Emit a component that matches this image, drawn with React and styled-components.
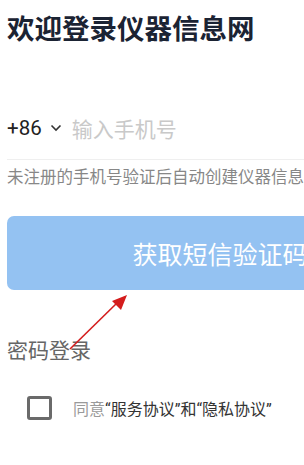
import { createGlobalStyle, styled } from "styled-components";

const GlobalStyle = createGlobalStyle`
  html, body {
    margin: 0;
    padding: 0;
    background: #ffffff;
    overflow: hidden;
  }
  body {
    font-family: Roboto, "Noto Sans CJK SC", sans-serif;
  }
`;

const Page = styled.div`
  position: relative;
  width: 440px;
  height: 465px;
  padding: 14px 0 0 7px;
  box-sizing: border-box;
`;

const Title = styled.h1`
  margin: 0;
  font-size: 27.5px;
  line-height: 32px;
  font-weight: 700;
  color: #1b2333;
`;

const PhoneRow = styled.div`
  display: flex;
  align-items: center;
  height: 40px;
  margin-top: 62px;
  padding-bottom: 11px;
  border-bottom: 1px solid #efefef;
`;

const Code = styled.span`
  font-size: 20.5px;
  color: #222;
`;

const Chevron = styled.svg`
  margin: 0 10px 0 8px;
  width: 12px;
  height: 8px;
`;

const PhoneInput = styled.span`
  font-size: 21px;
  color: #c9c9c9;
`;

const Hint = styled.p`
  margin: 6px 0 0;
  font-size: 16.5px;
  line-height: 24px;
  color: #878787;
  white-space: nowrap;
`;

const SmsButton = styled.button`
  display: flex;
  align-items: center;
  justify-content: center;
  width: 426px;
  height: 74px;
  margin-top: 26px;
  border: none;
  border-radius: 7px;
  background: #94c2f2;
  color: #ffffff;
  font-family: inherit;
  font-size: 25px;
  padding: 0;
`;

const SwitchLink = styled.div`
  margin-top: 47px;
  font-size: 21px;
  line-height: 28px;
  color: #666;
`;

const AgreeRow = styled.div`
  display: flex;
  align-items: center;
  margin: 31px 0 0 20px;
  gap: 21px;
  height: 24px;
`;

const Box = styled.span`
  width: 25px;
  height: 24px;
  box-sizing: border-box;
  border: 3px solid #6a6a6a;
  border-radius: 3px;
`;

const AgreeText = styled.span`
  font-size: 16px;
  color: #333;
`;

const Muted = styled.span`
  color: #9a9a9a;
`;

const Arrow = styled.svg`
  position: absolute;
  left: 0;
  top: 0;
  pointer-events: none;
`;

export default function App() {
  return (
    <>
      <GlobalStyle />
      <Page>
        <Title>欢迎登录仪器信息网</Title>
        <PhoneRow>
          <Code>+86</Code>
          <Chevron viewBox="0 0 12 8">
            <path d="M1.5 1.5 L6 6 L10.5 1.5" fill="none" stroke="#333" strokeWidth="1.6" />
          </Chevron>
          <PhoneInput>输入手机号</PhoneInput>
        </PhoneRow>
        <Hint>未注册的手机号验证后自动创建仪器信息网账号</Hint>
        <SmsButton>获取短信验证码</SmsButton>
        <SwitchLink>密码登录</SwitchLink>
        <AgreeRow>
          <Box />
          <AgreeText>
            <Muted>同意</Muted>“服务协议”和“隐私协议”
          </AgreeText>
        </AgreeRow>
        <Arrow width="304" height="465" viewBox="0 0 304 465">
          <line x1="70" y1="349" x2="118" y2="302" stroke="#d41c1c" strokeWidth="1.6" />
          <polygon points="127,295 112,301 121,310" fill="#d41c1c" />
        </Arrow>
      </Page>
    </>
  );
}
